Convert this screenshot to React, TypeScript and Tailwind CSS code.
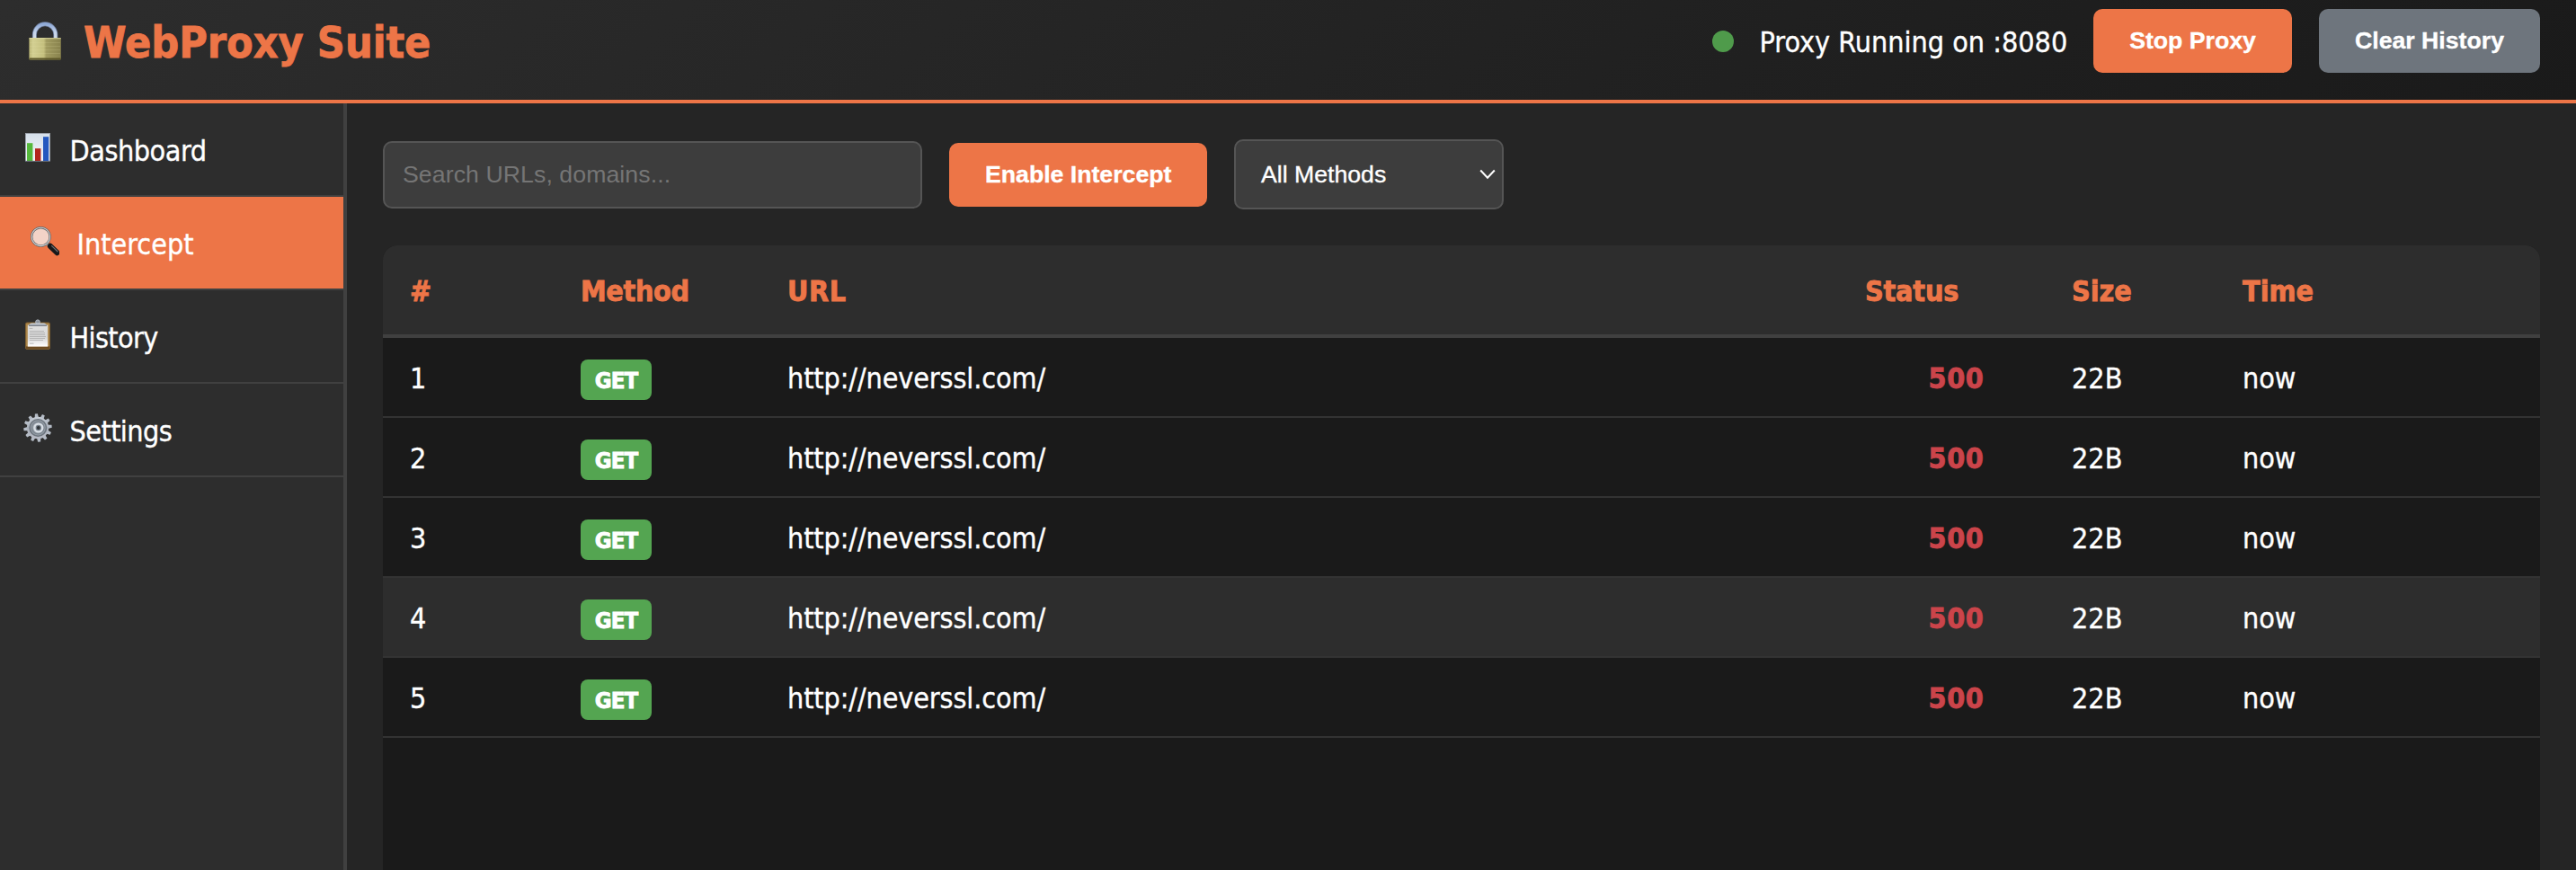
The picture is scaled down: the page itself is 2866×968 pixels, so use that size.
import React from "react";

function LockIcon() {
  return (
    <svg width="36" height="43" viewBox="0 0 36 43" className="block shrink-0">
      <defs>
        <linearGradient id="lockBody" x1="0" x2="1" y1="0" y2="0">
          <stop offset="0" stopColor="#b9b474" />
          <stop offset="0.12" stopColor="#d3cf92" />
          <stop offset="0.46" stopColor="#c4bf7e" />
          <stop offset="0.54" stopColor="#a19b60" />
          <stop offset="1" stopColor="#88824d" />
        </linearGradient>
        <linearGradient id="lockShackle" x1="0" x2="0" y1="0" y2="1">
          <stop offset="0" stopColor="#8fa9d6" />
          <stop offset="0.5" stopColor="#c3d3ec" />
          <stop offset="1" stopColor="#d8dde4" />
        </linearGradient>
      </defs>
      <path d="M6.4 20V14.5a11.7 11.7 0 0 1 23.4 0V20" fill="none" stroke="#6f7f9e" strokeWidth="5" />
      <path d="M6.4 20V14.5a11.7 11.7 0 0 1 23.4 0V20" fill="none" stroke="url(#lockShackle)" strokeWidth="3.4" />
      <rect x="0.4" y="18" width="35.4" height="24.6" rx="1" fill="url(#lockBody)" />
      <rect x="0.4" y="18" width="35.4" height="1.3" fill="#dcd8a3" opacity="0.7" />
      <path d="M1 23.5H35M1 27.5H35M1 31.5H35M1 35.5H35" stroke="#e6e2a8" strokeWidth="1" opacity="0.16" />
      <rect x="0.4" y="40.4" width="35.4" height="2.2" rx="1" fill="#5d5729" />
    </svg>
  );
}

function ChartIcon() {
  return (
    <svg width="32" height="36" viewBox="0 0 32 36" className="block">
      <defs>
        <linearGradient id="chartBg" x1="0" x2="0" y1="0" y2="1">
          <stop offset="0" stopColor="#d5dfea" />
          <stop offset="1" stopColor="#f4f7fa" />
        </linearGradient>
      </defs>
      <rect x="2.5" y="2.5" width="27" height="31" fill="url(#chartBg)" stroke="#9ba1aa" />
      <rect x="4" y="13.2" width="6.4" height="19.8" fill="#55b83c" />
      <rect x="13" y="19.2" width="6.4" height="13.8" fill="#b3261c" />
      <rect x="22" y="6.2" width="6.2" height="26.8" fill="#2458bf" />
      <path d="M2 33.4H30" stroke="#5c626c" />
    </svg>
  );
}

function SearchIcon() {
  return (
    <svg width="32" height="36" viewBox="0 0 32 36" className="block">
      <path d="M18.5 21.5L22 25" stroke="#b9bcbe" strokeWidth="3" />
      <path d="M21.8 23.8L29.6 31.2" stroke="#17181a" strokeWidth="6" strokeLinecap="round" />
      <path d="M23.6 23.6L30 29.8" stroke="#6b6d70" strokeWidth="1.3" strokeLinecap="round" />
      <circle cx="11.4" cy="13.4" r="10.2" fill="#f3d3c7" stroke="#5f6163" strokeWidth="2.4" />
      <circle cx="11.4" cy="13.4" r="10.2" fill="none" stroke="#c9cccf" strokeWidth="1.1" />
    </svg>
  );
}

function ClipboardIcon() {
  return (
    <svg width="32" height="36" viewBox="0 0 32 36" className="block">
      <defs>
        <linearGradient id="paper" x1="0" x2="0" y1="0" y2="1">
          <stop offset="0" stopColor="#dfdfdf" />
          <stop offset="0.6" stopColor="#d8d8d8" />
          <stop offset="1" stopColor="#ffffff" />
        </linearGradient>
      </defs>
      <rect x="2.5" y="5" width="27" height="29.5" rx="1.5" fill="#ab8549" stroke="#7d5f31" />
      <rect x="3" y="31.4" width="26" height="2.8" fill="#6c4b22" />
      <rect x="4.8" y="7.6" width="22.4" height="24" fill="url(#paper)" />
      <path d="M6.6 11.4h3.8M7 14.5h16M7 16.5h17M7 18.5h17M7 20.5h18M7 22.5h17M7 24.5h15M7 28.2h4.5" stroke="#a9a9a9" strokeWidth="1" opacity="0.75" />
      <circle cx="16" cy="4.2" r="2.3" fill="#8b929c" stroke="#b8bec8" />
      <path d="M6 8.6Q6.4 6 9.5 5.6H22.5Q25.6 6 26 8.6Z" fill="#c4cad3" />
      <path d="M6 8.2H26" stroke="#757b84" strokeWidth="1.4" />
    </svg>
  );
}

const teeth = [4, 34, 64, 94, 124, 154, 184, 214, 244, 274, 304, 334];

function GearIcon() {
  return (
    <svg width="32" height="36" viewBox="0 0 32 36" className="block">
      <defs>
        <linearGradient id="gear" x1="0" x2="0" y1="0" y2="1">
          <stop offset="0" stopColor="#c6cdd6" />
          <stop offset="0.5" stopColor="#aab1bb" />
          <stop offset="1" stopColor="#b9bcc6" />
        </linearGradient>
      </defs>
      {teeth.map((a) => (
        <path key={a} d="M13.7 8L14.5 2.3H17.5L18.3 8Z" fill="#b4bbc5" transform={`rotate(${a - 10} 16 18)`} />
      ))}
      <circle cx="16" cy="18" r="12.2" fill="url(#gear)" />
      <circle cx="16.3" cy="18" r="9.2" fill="#969fa8" stroke="#6d757e" strokeWidth="1.6" />
      <circle cx="16.3" cy="18" r="6.8" fill="none" stroke="#7b848e" strokeWidth="1.2" />
      <circle cx="16.8" cy="18" r="4.4" fill="#76808a" stroke="#d9dfe6" strokeWidth="2.4" />
      <circle cx="16.8" cy="18" r="1.9" fill="#2f3338" />
    </svg>
  );
}

const nav = [
  { label: "Dashboard", icon: <ChartIcon />, track: "tracking-[-0.45px]", active: false },
  { label: "Intercept", icon: <SearchIcon />, track: "tracking-normal", active: true },
  { label: "History", icon: <ClipboardIcon />, track: "tracking-[-0.6px]", active: false },
  { label: "Settings", icon: <GearIcon />, track: "tracking-[-0.55px]", active: false },
];

const rows = [1, 2, 3, 4, 5].map((id) => ({
  id,
  method: "GET",
  url: "http://neverssl.com/",
  status: 500,
  size: "22B",
  time: "now",
  hovered: id === 4,
}));

const gridCols = "grid grid-cols-[160px_200px_1169px_200px_160px_1fr] gap-x-[30px] px-[30px] items-center";
const button = "h-[71px] rounded-[10px] px-10 font-bold text-white whitespace-nowrap";
const sans = "font-['Liberation_Sans',Arial,sans-serif] text-[26.67px] leading-[30px]";
const heavy = "[-webkit-text-stroke:0.8px_currentColor]";

export default function App() {
  return (
    <div className="flex h-[968px] w-full flex-col overflow-hidden bg-[#252525] font-['DejaVu_Sans_Condensed','DejaVu_Sans',sans-serif] text-[32px] leading-[38px] text-white [-webkit-text-stroke:0.35px_currentColor]">
      <header className="flex h-[115px] shrink-0 items-center justify-between border-b-4 border-[#ed7547] bg-linear-135 from-[#2d2d2d] to-[#1a1a1a] pr-10 pb-5 pl-8">
        <div className="flex items-center">
          <LockIcon />
          <h1 className={`pt-[3px] pl-[25px] text-[48px] leading-[56px] font-bold text-[#ed7547] ${heavy}`}>WebProxy Suite</h1>
        </div>
        <div className="flex items-center">
          <span className="size-6 rounded-full bg-[#4f9b4b]" />
          <span className="mr-[29px] w-[371px] pt-[3px] pl-[28.5px] whitespace-nowrap">Proxy Running on :8080</span>
          <button className={`${button} ${sans} w-[221px] bg-[#ed7547] pb-0.5`}>Stop Proxy</button>
          <button className={`${button} ${sans} ml-[30px] w-[246px] bg-[#6e757d] pb-0.5`}>Clear History</button>
        </div>
      </header>

      <div className="flex min-h-0 flex-1">
        <nav className="w-[386px] shrink-0 border-r-4 border-[#404040] bg-[#2d2d2d]">
          {nav.map((n) => (
            <div
              key={n.label}
              className={`flex h-[104px] items-center border-b-2 border-[#404040] ${
                n.active ? "bg-[#ed7547] bg-clip-padding pl-[34px]" : "pl-[26px]"
              }`}
            >
              <span className="pb-[5px]">{n.icon}</span>
              <span className={`pt-[3px] pl-[19.5px] ${n.track}`}>{n.label}</span>
            </div>
          ))}
        </nav>

        <main className="flex min-w-0 flex-1 flex-col pt-10 pr-10 pl-10">
          <div className={`flex h-[78px] shrink-0 items-center ${sans}`}>
            <input
              className="h-[75px] w-[600px] rounded-[10px] border-2 border-[#555] bg-[#3d3d3d] px-5 tracking-[0.08px] [-webkit-text-stroke:0] placeholder:text-[#757575] placeholder:opacity-100"
              placeholder="Search URLs, domains..."
            />
            <button className={`${button} ml-[30px] w-[287px] bg-[#ed7547]`}>Enable Intercept</button>
            <div className="ml-[30px] flex h-[78px] w-[300px] items-center justify-between rounded-[10px] border-2 border-[#555] bg-[#3d3d3d] pr-[7px] pl-7">
              <span>All Methods</span>
              <svg width="18" height="12" viewBox="0 0 18 12" className="block">
                <path d="M1.2 1.5L9 9.8L16.8 1.5" fill="none" stroke="#fff" strokeWidth="2" />
              </svg>
            </div>
          </div>

          <section className="mt-10 min-h-0 flex-1 overflow-hidden rounded-t-2xl bg-[#1a1a1a]">
            <div className={`${gridCols} h-[103px] border-b-4 border-[#404040] bg-[#2d2d2d] pt-[3px] font-bold text-[#ed7547] ${heavy}`}>
              <span>#</span>
              <span className="tracking-[-0.35px]">Method</span>
              <span className="tracking-[0.6px]">URL</span>
              <span className="tracking-[-0.2px]">Status</span>
              <span>Size</span>
              <span>Time</span>
            </div>
            {rows.map((r) => (
              <div
                key={r.id}
                className={`${gridCols} h-[89px] border-b-2 border-[#333] pt-[3px] ${r.hovered ? "bg-[#2d2d2d]" : "bg-[#1a1a1a]"}`}
              >
                <span>{r.id}</span>
                <span className={`mt-0.5 h-[45px] w-[79px] rounded-lg bg-[#54a551] pt-0.5 text-center text-[25.6px] leading-[43px] font-bold tracking-[-0.9px] ${heavy}`}>
                  {r.method}
                </span>
                <span className="tracking-[-0.1px]">{r.url}</span>
                <span className={`pl-[3px] text-center font-bold tracking-[0.6px] text-[#cb444a] ${heavy}`}>{r.status}</span>
                <span>{r.size}</span>
                <span>{r.time}</span>
              </div>
            ))}
          </section>
        </main>
      </div>
    </div>
  );
}
